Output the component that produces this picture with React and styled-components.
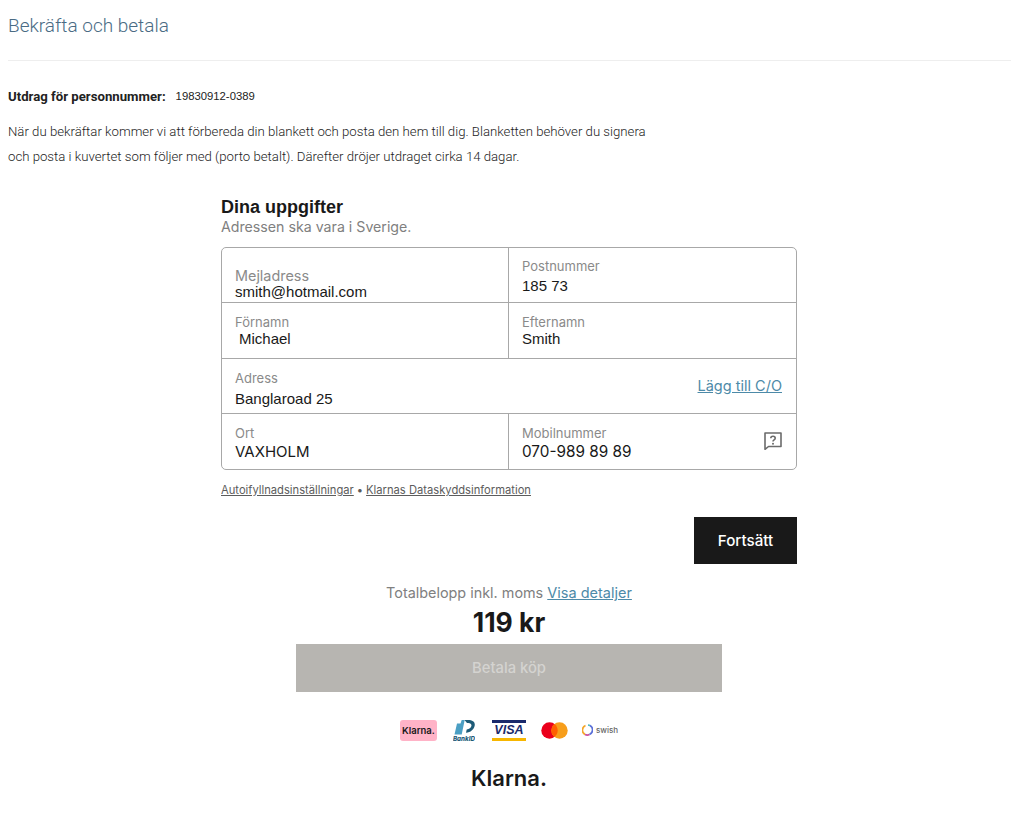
import styled, { createGlobalStyle } from "styled-components";

const GlobalStyle = createGlobalStyle`
  html, body {
    margin: 0;
    padding: 0;
    background: #fff;
  }
`;

const Page = styled.div`
  width: 1024px;
  height: 836px;
  overflow: hidden;
  box-sizing: border-box;
  padding: 0 13px 0 8px;
  font-family: Roboto, sans-serif;
`;

const Header = styled.header`
  height: 46px;
  border-bottom: 1px solid #eeeeee;
  padding-top: 14px;
`;

const Title = styled.h1`
  margin: 0;
  font-size: 19px;
  line-height: 24px;
  font-weight: 300;
  color: #4a6b84;
`;

const Extract = styled.div`
  margin-top: 27px;
  display: flex;
  align-items: center;
  height: 16px;
  color: #222;
`;

const ExtractLabel = styled.strong`
  font-size: 13.2px;
  font-weight: 700;
  margin-right: 10px;
`;

const ExtractValue = styled.span`
  font-family: "Liberation Sans", sans-serif;
  font-size: 11.3px;
`;

const Intro = styled.p`
  margin: 15px 0 0;
  font-size: 13.2px;
  line-height: 25px;
  font-weight: 300;
  color: #1c1c1c;
`;

const Checkout = styled.main`
  width: 576px;
  margin: 28px 0 0 213px;
  font-family: Inter, sans-serif;
`;

const FormTitle = styled.h2`
  margin: 0;
  font-family: "Liberation Sans", sans-serif;
  font-size: 18px;
  line-height: 20px;
  font-weight: 700;
  color: #191919;
`;

const FormHint = styled.p`
  margin: 0 0 10px;
  font-size: 14.2px;
  line-height: 20px;
  color: #808080;
`;

const FieldGrid = styled.div`
  display: grid;
  grid-template-columns: 286px 1fr;
  grid-template-rows: 54px 56px 55px 56px;
  border: 1px solid #a8a8a8;
  border-radius: 5px;
  box-sizing: border-box;
  height: 223px;
`;

const Field = styled.div`
  position: relative;
  grid-column: ${(p) => (p.$wide ? "1 / 3" : "auto")};
  box-sizing: border-box;
  padding: ${(p) => p.$top || 11}px 14px 0 13px;
  border-top: ${(p) => (p.$first ? "none" : "1px solid #a8a8a8")};
  border-left: ${(p) => (p.$right ? "1px solid #a8a8a8" : "none")};
  display: flex;
  align-items: flex-start;
  justify-content: space-between;
`;

const FieldText = styled.div`
  display: flex;
  flex-direction: column;
`;

const FieldLabel = styled.span`
  font-size: ${(p) => p.$size || 13}px;
  line-height: 16px;
  color: #8a8a8a;
`;

const FieldValue = styled.span`
  font-family: ${(p) => (p.$arial ? '"Liberation Sans", sans-serif' : "Inter, sans-serif")};
  font-size: ${(p) => p.$size || 15}px;
  line-height: 18px;
  margin-top: ${(p) => p.$gap || 0}px;
  padding-left: ${(p) => p.$indent || 0}px;
  color: #191919;
`;

const Link = styled.a`
  font-size: 14.5px;
  color: #4d8aa8;
  text-decoration: underline;
`;

const CoLink = styled(Link)`
  margin-top: 7px;
`;

const HelpButton = styled.span`
  position: absolute;
  right: 14px;
  top: 18px;
  display: flex;
`;

const SmallLinks = styled.div`
  margin-top: 12px;
  font-size: 11.2px;
  line-height: 16px;
  color: #5c5c5c;
  display: flex;
  gap: 3px;
`;

const SmallLink = styled.a`
  text-decoration: underline;
`;

const ContinueRow = styled.div`
  display: flex;
  justify-content: flex-end;
  margin-top: 19px;
`;

const ContinueButton = styled.button`
  width: 103px;
  height: 47px;
  border: none;
  background: #191919;
  color: #fff;
  font-family: Inter, sans-serif;
  font-size: 15.2px;
  font-weight: 500;
`;

const Summary = styled.section`
  display: flex;
  flex-direction: column;
  align-items: center;
  margin-top: 19px;
`;

const TotalLine = styled.div`
  font-size: 14.4px;
  line-height: 20px;
  color: #808080;
`;

const Amount = styled.div`
  margin-top: 3px;
  font-size: 26.5px;
  line-height: 32px;
  font-weight: 700;
  color: #191919;
`;

const PayButton = styled.button`
  margin-top: 6px;
  width: 426px;
  height: 48px;
  border: none;
  background: #b7b5b1;
  color: #d4d3d0;
  font-family: Inter, sans-serif;
  font-size: 14.8px;
  font-weight: 500;
`;

const Badges = styled.div`
  margin-top: 27px;
  height: 22px;
  display: flex;
  align-items: center;
`;

const KlarnaBadge = styled.span`
  width: 37px;
  height: 21px;
  border-radius: 3px;
  background: #ffb3c7;
  color: #191919;
  font-size: 9.5px;
  font-weight: 600;
  display: flex;
  align-items: center;
  justify-content: center;
`;

const BankIdMark = styled.svg`
  margin-left: 16px;
`;

const VisaBadge = styled.span`
  margin-left: 17px;
  width: 34px;
  height: 21px;
  box-sizing: border-box;
  border-top: 3px solid #1a2a6c;
  border-bottom: 3px solid #f7b600;
  color: #1a2a6c;
  font-family: "Liberation Sans", sans-serif;
  font-size: 12.5px;
  font-weight: 700;
  font-style: italic;
  display: flex;
  align-items: center;
  justify-content: center;
`;

const MastercardMark = styled.svg`
  margin-left: 15px;
`;

const SwishBadge = styled.span`
  margin-left: 14px;
  display: flex;
  align-items: center;
  gap: 3px;
  font-size: 8px;
  font-weight: 500;
  color: #666;
`;

const KlarnaLogo = styled.div`
  margin-top: 23px;
  font-size: 22px;
  line-height: 28px;
  font-weight: 600;
  color: #191919;
`;

function HelpIcon() {
  return (
    <svg width="18" height="18" viewBox="0 0 18 18" fill="none">
      <path d="M1 1h16v13.500H4.500L1 17.300z" stroke="#6b6b6b" strokeWidth="1.6" strokeLinejoin="round" />
      <path d="M6.800 6.300c0-2.700 4.400-2.700 4.400 0 0 1.700-2.200 1.500-2.200 3.200" stroke="#6b6b6b" strokeWidth="1.6" />
      <circle cx="9" cy="11.800" r="1" fill="#6b6b6b" />
    </svg>
  );
}

function BankIdIcon() {
  return (
    <BankIdMark width="22" height="22" viewBox="0 0 22 22">
      <path d="M4 4.500h3.500L8.700 1h3l-3 14.500H1.500z" fill="#4b9fc4" />
      <path d="M11.500 1h3.500c5 0 7.500 2.200 6.600 6-.8 3.500-4 6.500-8.600 6.800l.7-3.300c2.600-.3 4.300-1.800 4.700-3.500.4-1.800-.9-3-3-3h-1.400z" fill="#1d5b78" />
      <text x="0" y="21.500" fontSize="6.200" fontWeight="800" fontStyle="italic" fontFamily="Inter, sans-serif" fill="#1d5b78">BankID</text>
    </BankIdMark>
  );
}

function MastercardIcon() {
  return (
    <MastercardMark width="27" height="17" viewBox="0 0 27 17">
      <circle cx="8.500" cy="8.500" r="8.200" fill="#eb001b" />
      <circle cx="18.500" cy="8.500" r="8.200" fill="#f79e1b" />
      <path d="M13.500 2a8.200 8.200 0 0 1 0 13a8.200 8.200 0 0 1 0-13z" fill="#ff5f00" />
    </MastercardMark>
  );
}

function SwishIcon() {
  return (
    <svg width="11" height="12" viewBox="0 0 11 12" fill="none">
      <path d="M3.500 1.500A5 5 0 0 0 3 10.500" stroke="#f4a62a" strokeWidth="1.700" />
      <path d="M3 10.500A5 5 0 0 0 7.500 10.500" stroke="#c94fa0" strokeWidth="1.700" />
      <path d="M7.500 10.500A5 5 0 0 0 8 1.500" stroke="#5a6fd8" strokeWidth="1.700" />
      <path d="M8 1.500A5 5 0 0 0 6 1" stroke="#45b5c4" strokeWidth="1.700" />
    </svg>
  );
}

export default function App() {
  return (
    <Page>
      <GlobalStyle />
      <Header>
        <Title>Bekräfta och betala</Title>
      </Header>

      <Extract>
        <ExtractLabel>Utdrag för personnummer:</ExtractLabel>
        <ExtractValue>19830912-0389</ExtractValue>
      </Extract>
      <Intro>
        När du bekräftar kommer vi att förbereda din blankett och posta den hem till dig. Blanketten behöver du signera
        <br />
        och posta i kuvertet som följer med (porto betalt). Därefter dröjer utdraget cirka 14 dagar.
      </Intro>

      <Checkout>
        <FormTitle>Dina uppgifter</FormTitle>
        <FormHint>Adressen ska vara i Sverige.</FormHint>

        <FieldGrid>
          <Field $first $top={20}>
            <FieldText>
              <FieldLabel $size={14.4}>Mejladress</FieldLabel>
              <FieldValue $arial $gap={-1}>smith@hotmail.com</FieldValue>
            </FieldText>
          </Field>
          <Field $first $right $top={10}>
            <FieldText>
              <FieldLabel>Postnummer</FieldLabel>
              <FieldValue $arial $gap={3}>185 73</FieldValue>
            </FieldText>
          </Field>
          <Field>
            <FieldText>
              <FieldLabel>Förnamn</FieldLabel>
              <FieldValue $arial $indent={4}>Michael</FieldValue>
            </FieldText>
          </Field>
          <Field $right>
            <FieldText>
              <FieldLabel>Efternamn</FieldLabel>
              <FieldValue $arial>Smith</FieldValue>
            </FieldText>
          </Field>
          <Field $wide>
            <FieldText>
              <FieldLabel>Adress</FieldLabel>
              <FieldValue $arial $gap={4}>Banglaroad 25</FieldValue>
            </FieldText>
            <CoLink>Lägg till C/O</CoLink>
          </Field>
          <Field>
            <FieldText>
              <FieldLabel>Ort</FieldLabel>
              <FieldValue $gap={2}>VAXHOLM</FieldValue>
            </FieldText>
          </Field>
          <Field $right>
            <FieldText>
              <FieldLabel>Mobilnummer</FieldLabel>
              <FieldValue $gap={2} $size={15.3}>070-989 89 89</FieldValue>
            </FieldText>
            <HelpButton>
              <HelpIcon />
            </HelpButton>
          </Field>
        </FieldGrid>

        <SmallLinks>
          <SmallLink>Autoifyllnadsinställningar</SmallLink>
          <span>•</span>
          <SmallLink>Klarnas Dataskyddsinformation</SmallLink>
        </SmallLinks>

        <ContinueRow>
          <ContinueButton>Fortsätt</ContinueButton>
        </ContinueRow>

        <Summary>
          <TotalLine>
            Totalbelopp inkl. moms <Link href="#">Visa detaljer</Link>
          </TotalLine>
          <Amount>119 kr</Amount>
          <PayButton>Betala köp</PayButton>
          <Badges>
            <KlarnaBadge>Klarna.</KlarnaBadge>
            <BankIdIcon />
            <VisaBadge>VISA</VisaBadge>
            <MastercardIcon />
            <SwishBadge>
              <SwishIcon />
              swish
            </SwishBadge>
          </Badges>
          <KlarnaLogo>Klarna.</KlarnaLogo>
        </Summary>
      </Checkout>
    </Page>
  );
}
